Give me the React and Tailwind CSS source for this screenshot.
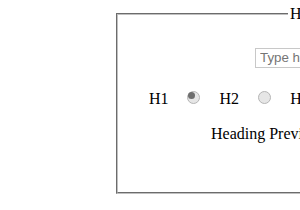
const Radio = ({ checked }) => (
  <span className="inline-block w-[13px] h-[13px] rounded-full border border-[#b5b5b5] bg-[#e6e6e6] flex items-center justify-center">
    {checked && <span className="block w-[7px] h-[7px] rounded-full bg-[#6e6e6e]" />}
  </span>
);

export default function App() {
  return (
    <div className="w-[300px] h-[210px] overflow-hidden bg-white font-['Liberation_Serif',serif] text-[16px] text-black">
      <fieldset className="ml-[116px] mt-[5px] w-[420px] h-[189px] border-2 [border-style:groove] border-[#c0c0c0]">
        <legend className="ml-[170px] px-[2px] leading-[18px]">Headings</legend>
        <div className="pl-[137px] pt-[22px]">
          <input
            type="text"
            placeholder="Type heading"
            className="w-[140px] h-[20px] border border-[#c8c8c8] px-[4px] text-[13.33px] font-['Liberation_Sans',sans-serif] placeholder:text-[#757575] outline-none"
          />
        </div>
        <div className="flex items-center pl-[31px] mt-[20px] h-[20px]">
          <span>H1</span>
          <span className="ml-[18px]"><Radio checked /></span>
          <span className="ml-[20px]">H2</span>
          <span className="ml-[19px]"><Radio /></span>
          <span className="ml-[19px]">H3</span>
        </div>
        <div className="pl-[93px] mt-[16px] leading-[18px]">Heading Preview</div>
      </fieldset>
    </div>
  );
}
